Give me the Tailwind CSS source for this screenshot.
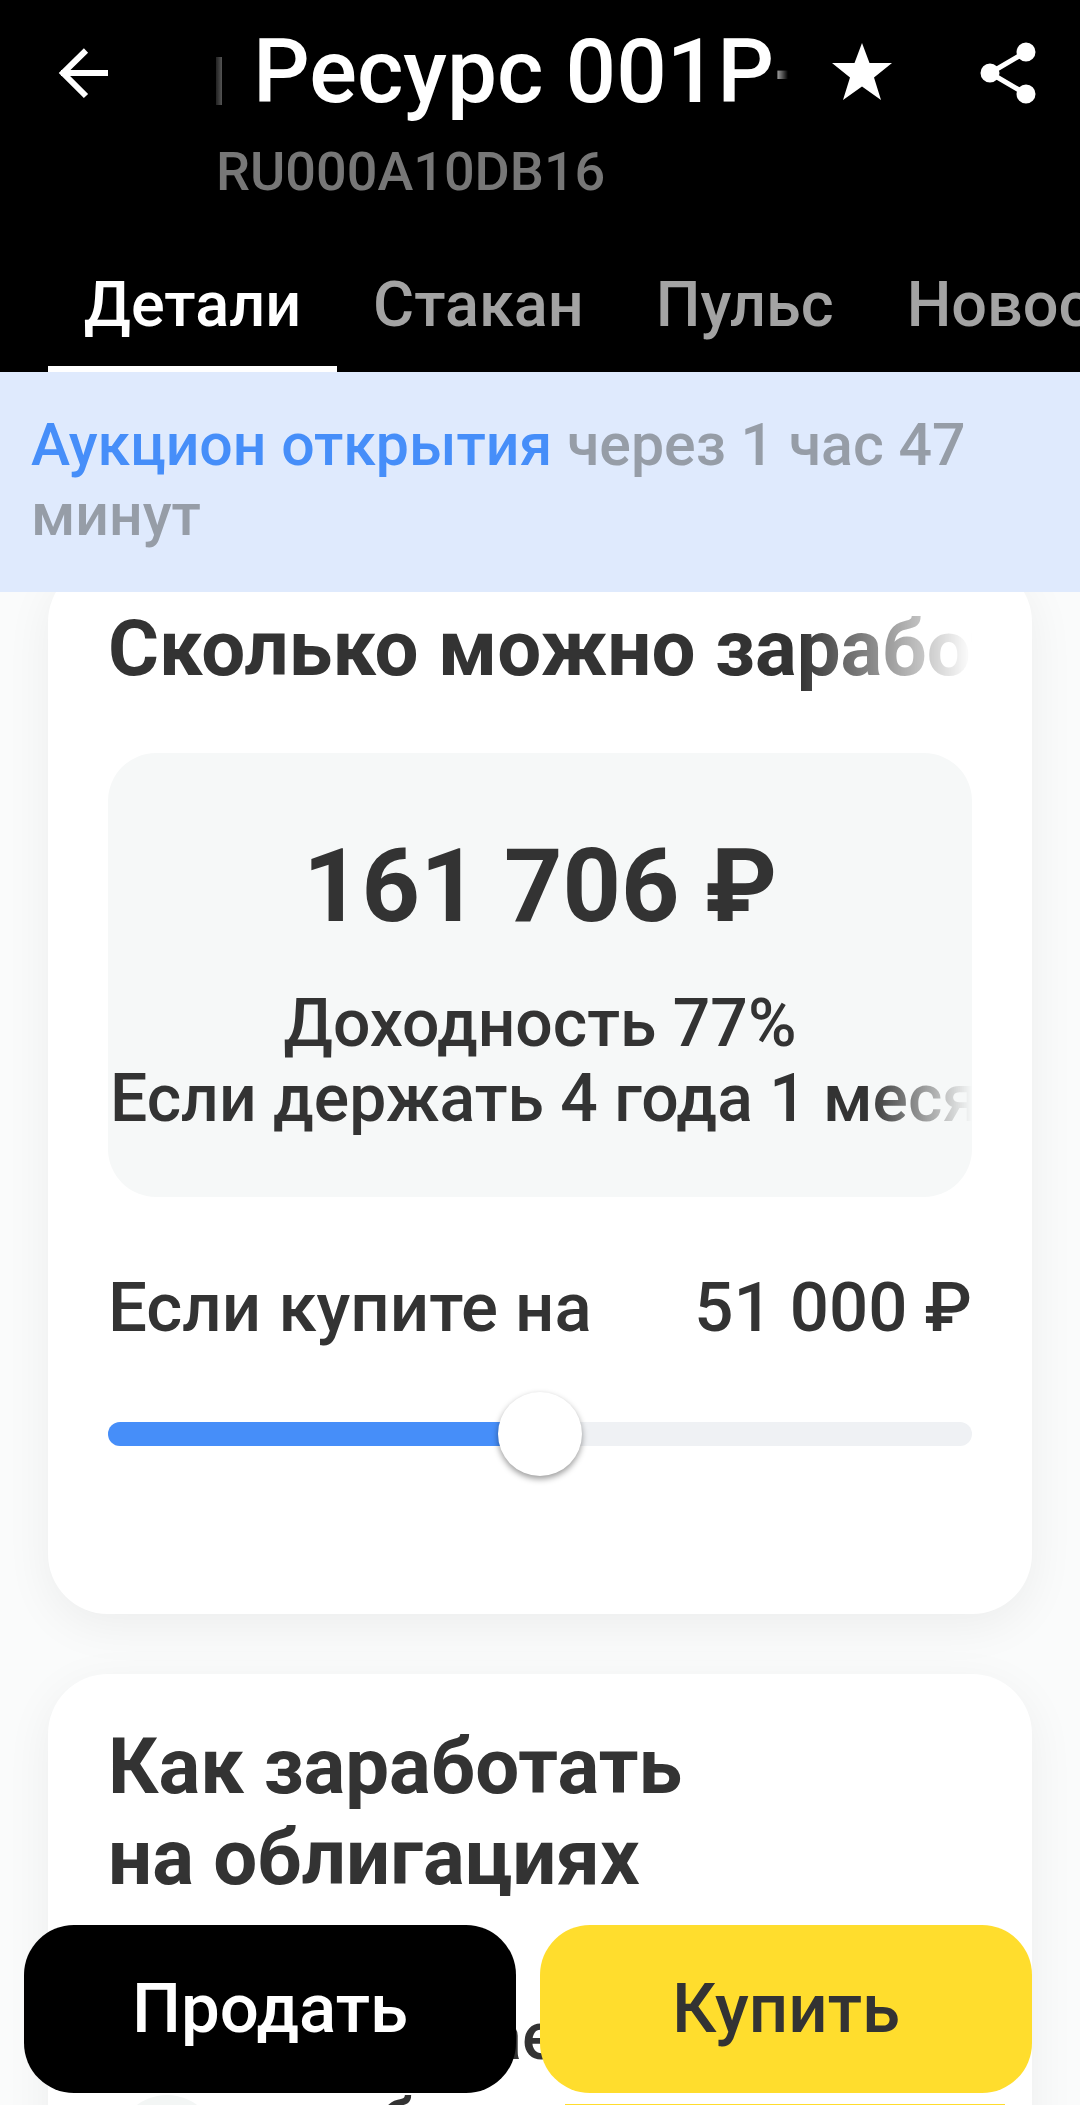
<!DOCTYPE html>
<html lang="ru">
<head>
  <meta charset="UTF-8" />
  <meta name="viewport" content="width=device-width, initial-scale=1.0" />
  <title>Ресурс 001Р</title>
  <script src="https://cdn.jsdelivr.net/npm/@tailwindcss/browser@4"></script>
</head>
<body class="bg-[#fafbfb] font-['Roboto',sans-serif]">
<div class="relative h-[2105px] w-[1080px] overflow-hidden flex flex-col">

  <!-- Header -->
  <header class="relative z-10 shrink-0 h-[372px] bg-black flex flex-col">
    <div class="flex items-start h-[140px] shrink-0">
      <button class="w-[216px] h-[100px] pl-[56px] pt-[44px] shrink-0">
        <svg width="60" height="60" viewBox="0 0 60 60" fill="none" stroke="white" stroke-width="6">
          <path d="M5 29H52M30 6.5L7 29L30 52" />
        </svg>
      </button>
      <div class="w-[572px] h-[124px] shrink-0 overflow-hidden flex items-start [mask-image:linear-gradient(to_right,black_97%,transparent)]">
        <div class="w-[6px] h-[48px] mt-[57px] mr-[31px] shrink-0 bg-gradient-to-r from-[#222] to-[#555]"></div>
        <div class="text-white text-[89px] leading-[112px] font-medium whitespace-nowrap pt-[16px]">Ресурс 001Р-02</div>
      </div>
      <svg class="ml-[43px] mt-[40px] shrink-0" width="62" height="62" viewBox="0 0 62 62" fill="white">
        <path d="M31 3L38.5 23H61L43 37.5L50 60L31 46.5L12 60L19 37.5L1 23H23.5Z" />
      </svg>
      <svg class="ml-[82px] mt-[41px] shrink-0" width="62" height="72" viewBox="0 0 62 72" fill="white" stroke="white" stroke-width="5">
        <path d="M51 11L15 32L51 53" fill="none" />
        <circle cx="51" cy="11" r="7" />
        <circle cx="15" cy="32" r="7" />
        <circle cx="51" cy="53" r="7" />
      </svg>
    </div>
    <div class="pl-[216px] text-[#777] text-[54px] leading-[64px] font-medium">RU000A10DB16</div>
    <nav class="mt-auto flex h-[136px] text-[63px] leading-[70px] font-medium whitespace-nowrap overflow-hidden">
      <div class="ml-[48px] w-[289px] shrink-0 text-center text-white pt-[34px] border-b-[6px] border-white">Детали</div>
      <div class="ml-[36px] shrink-0 text-[#a3a3a3] pt-[34px]">Стакан</div>
      <div class="ml-[72px] shrink-0 text-[#a3a3a3] pt-[34px]">Пульс</div>
      <div class="ml-[73px] shrink-0 text-[#a3a3a3] pt-[34px]">Новости</div>
    </nav>
  </header>

  <!-- Banner -->
  <div class="relative z-10 shrink-0 h-[220px] bg-[#dfeafd] px-[31px] pt-[38px] text-[59px] leading-[70px] font-medium text-[#969da7]">
    <span class="text-[#468ef9]">Аукцион открытия</span> через 1 час 47 минут
  </div>

  <main class="flex flex-col gap-[60px] px-[48px] mt-[-30px]">

    <!-- Calculator card -->
    <section class="shrink-0 h-[1052px] bg-white rounded-[60px] shadow-[0_12px_48px_rgba(0,0,0,0.06)] px-[60px] pt-[42px]">
      <h2 class="text-[78px] leading-[90px] font-bold text-[#333] whitespace-nowrap overflow-hidden [mask-image:linear-gradient(to_right,black_80%,transparent)]">Сколько можно заработать</h2>
      <div class="mt-[59px] h-[444px] bg-[#f6f8f8] rounded-[48px] pt-[78px] text-center text-[#333] overflow-hidden">
        <div class="text-[102px] leading-[110px] font-bold">161 706 ₽</div>
        <div class="mt-[45px] text-[66px] leading-[75px] font-medium whitespace-nowrap [mask-image:linear-gradient(to_right,black_88%,transparent)]">
          <div>Доходность 77%</div>
          <div class="text-left pl-[2px]">Если держать 4 года 1 месяц</div>
        </div>
      </div>
      <div class="mt-[71px] flex justify-between text-[69px] leading-[80px] font-medium text-[#333]">
        <span>Если купите на</span>
        <span>51 000 ₽</span>
      </div>
      <div class="relative mt-[74px] h-[24px] rounded-full bg-[#eff1f4]">
        <div class="h-full w-[400px] rounded-l-full bg-[#468ef9]"></div>
        <div class="absolute left-[390px] top-[-30px] w-[84px] h-[84px] rounded-full bg-white shadow-[0_3px_6px_rgba(0,0,0,0.4)]"></div>
      </div>
    </section>

    <!-- Bonds card -->
    <section class="h-[600px] bg-white rounded-[60px] shadow-[0_12px_48px_rgba(0,0,0,0.06)] px-[60px] pt-[47px] text-[#333]">
      <h2 class="text-[78px] leading-[91px] font-bold">Как заработать<br />на облигациях</h2>
      <div class="mt-[96px] text-[66px] leading-[75px] font-medium whitespace-nowrap">Когда покупаете</div>
      <div class="mt-[21px] flex items-start">
        <div class="ml-[9px] w-[100px] h-[100px] rounded-full bg-[#f3f6f5] shrink-0"></div>
        <div class="ml-[20px] w-[328px] shrink-0 mt-[-9px] text-[66px] leading-[75px] font-medium whitespace-nowrap">зарабатываете</div>
        <div class="mt-[9px] w-[440px] h-[80px] shrink-0 bg-[#ffdd2d]"></div>
      </div>
    </section>
  </main>

  <!-- Bottom action buttons -->
  <div class="absolute z-20 left-[24px] top-[1925px] flex gap-[24px]">
    <button class="w-[492px] h-[168px] rounded-[50px] bg-black text-white text-[69px] font-medium">Продать</button>
    <button class="w-[492px] h-[168px] rounded-[50px] bg-[#ffdd2d] text-[#333] text-[69px] font-medium">Купить</button>
  </div>
</div>
</body>
</html>
